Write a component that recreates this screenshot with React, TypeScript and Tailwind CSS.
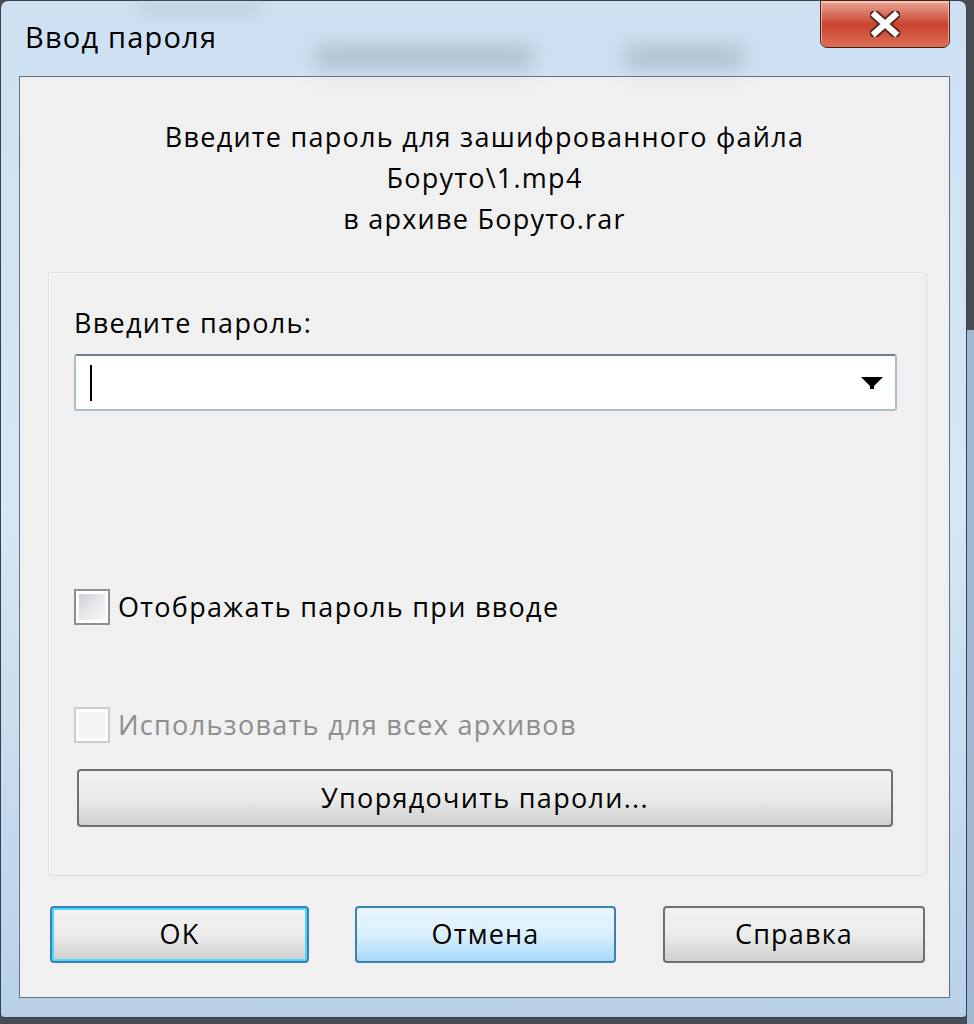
import React from 'react';

const font = { fontFamily: '"Open Sans", "Noto Sans", sans-serif' };

function Checkbox({ disabled }: { disabled?: boolean }) {
    return (
        <div className={`h-[36px] w-[36px] border-2 ${disabled ? 'border-[#cdcdcd]' : 'border-[#8e8f8f]'} bg-white p-[3px]`}>
            <div className={`h-full w-full ${disabled ? 'bg-[#f4f4f4]' : 'bg-gradient-to-br from-[#cbcfd5] via-[#e6e8eb] to-[#f6f6f6]'}`} />
        </div>
    );
}

function DialogButton({ label, kind, width }: { label: string; kind: 'default' | 'hover' | 'normal'; width: string }) {
    const styles = {
        default: 'border-[#3c7fb1] bg-gradient-to-b from-[#f2f2f2] via-[#ebebeb] to-[#d0d0d0] shadow-[inset_0_0_0_2px_#48d8fb]',
        hover: 'border-[#3c7fb1] bg-gradient-to-b from-[#eaf6fd] via-[#d9f0fc] to-[#a7d9f5]',
        normal: 'border-[#707070] bg-gradient-to-b from-[#f2f2f2] via-[#ebebeb] to-[#cfcfcf]',
    };
    return (
        <button className={`${width} h-[57px] rounded-[4px] border-2 ${styles[kind]} text-[27px] tracking-[1.2px] text-black flex items-center justify-center`}>
            {label}
        </button>
    );
}

export default function App() {
    return (
        <div className="w-[974px] h-[1024px] bg-[#4a4e54] overflow-hidden relative" style={font}>
            <div className="absolute right-0 top-[330px] w-[7px] h-[700px] bg-[#9fb9d3]" />
            <div className="w-[967px] h-[1018px] rounded-t-[8px] rounded-b-[4px] border border-[#34414f] bg-gradient-to-b from-[#cde1f3] via-[#d6e7f5] to-[#b9d1e8] pl-[18px] pr-[16px] flex flex-col">
                {/* title bar */}
                <div className="h-[75px] flex items-start shrink-0 relative">
                    {/* blurred background window showing through the glass */}
                    <div className="absolute left-[295px] top-[44px] w-[220px] h-[24px] bg-[#8c98a4] opacity-45 blur-[10px]" />
                    <div className="absolute left-[605px] top-[44px] w-[120px] h-[24px] bg-[#8c98a4] opacity-45 blur-[10px]" />
                    <div className="absolute left-[120px] top-[2px] w-[120px] h-[14px] bg-[#9aa6b2] opacity-30 blur-[8px]" />
                    <div className="relative self-center pl-[6px] pb-[4px] text-[29px] tracking-[1.2px] text-black">Ввод пароля</div>
                    <div className="relative ml-auto -mt-px w-[130px] h-[48px] rounded-b-[7px] border border-[#4b1d16] bg-gradient-to-b from-[#e8a797] via-[#c8432f] to-[#da6d52] flex items-center justify-center shadow-[inset_0_1px_0_1px_rgba(255,220,210,0.6)]">
                        <svg width="30" height="26" viewBox="0 0 30 26">
                            <path d="M5 4 L25 22 M25 4 L5 22" stroke="#5a2a22" strokeWidth="10" strokeLinecap="square" />
                            <path d="M5 4 L25 22 M25 4 L5 22" stroke="#ffffff" strokeWidth="6" strokeLinecap="square" />
                        </svg>
                    </div>
                </div>

                {/* client area */}
                <div className="w-[931px] h-[922px] border border-[#5f7183] bg-[#f0f0f0] flex flex-col">
                    <div className="pt-[39px] text-center text-[27px] tracking-[1.25px] leading-[41px] text-black">
                        <div>Введите пароль для зашифрованного файла</div>
                        <div>Боруто\1.mp4</div>
                        <div>в архиве Боруто.rar</div>
                    </div>

                    <div className="mt-[33px] ml-[28px] w-[879px] rounded-[4px] border border-[#d5dfe5] shadow-[inset_1px_1px_0_#ffffff] pl-[25px] pt-[35px] pb-[48px]">
                        <div className="text-[27px] tracking-[1.3px] leading-[30px] text-black">Введите пароль:</div>
                        <div className="mt-[16px] w-[823px] h-[57px] rounded-[3px] border-2 border-[#abbccb] border-t-[#6e8193] bg-white flex items-center pl-[14px] pr-[12px]">
                            <div className="w-[2px] h-[36px] bg-black" />
                            <svg className="ml-auto" width="22" height="14" viewBox="0 0 22 14">
                                <path d="M0 1 H22 L13 10 V13 H9 V10 Z" fill="#000000" />
                            </svg>
                        </div>

                        <div className="mt-[178px] flex items-center gap-[8px] h-[36px]">
                            <Checkbox />
                            <span className="text-[27px] tracking-[1.3px] text-black">Отображать пароль при вводе</span>
                        </div>

                        <div className="mt-[82px] flex items-center gap-[8px] h-[36px]">
                            <Checkbox disabled />
                            <span className="text-[27px] tracking-[1.3px] text-[#8d8d8d]">Использовать для всех архивов</span>
                        </div>

                        <button className="mt-[26px] ml-[3px] w-[816px] h-[58px] rounded-[4px] border-2 border-[#707070] bg-gradient-to-b from-[#f2f2f2] via-[#ebebeb] to-[#cfcfcf] text-[27px] tracking-[1.3px] text-black flex items-center justify-center">
                            Упорядочить пароли...
                        </button>
                    </div>

                    <div className="mt-[30px] ml-[30px] flex">
                        <DialogButton label="OK" kind="default" width="w-[259px]" />
                        <div className="w-[46px]" />
                        <DialogButton label="Отмена" kind="hover" width="w-[261px]" />
                        <div className="w-[47px]" />
                        <DialogButton label="Справка" kind="normal" width="w-[262px]" />
                    </div>
                </div>
            </div>
        </div>
    );
}
